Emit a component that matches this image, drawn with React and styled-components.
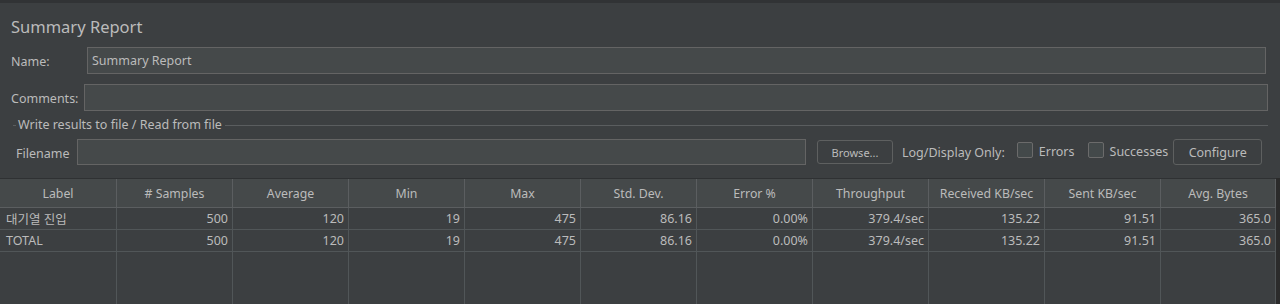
import React from "react";
import styled, { createGlobalStyle } from "styled-components";

const Global = createGlobalStyle`
  html, body { margin: 0; padding: 0; background: #3c3f41; }
  body { font-family: "Noto Sans", "Noto Sans CJK KR", sans-serif; font-size: 12.5px; color: #bbbbbb; }
  * { box-sizing: border-box; }
`;

const Page = styled.div`
  width: 1280px;
  height: 304px;
  overflow: hidden;
  background: #3c3f41;
  border-top: 3px solid #313335;
  display: flex;
  flex-direction: column;
`;

const Title = styled.div`
  font-size: 16.5px;
  color: #bbbbbb;
  padding: 13px 0 0 11px;
  height: 44px;
  line-height: 22px;
`;

const FieldRow = styled.div`
  display: flex;
  align-items: center;
  padding-left: ${(p) => p.$pl || 11}px;
  padding-right: ${(p) => p.$pr || 14}px;
  margin-bottom: ${(p) => p.$mb || 0}px;
`;

const Label = styled.div`
  width: ${(p) => p.$w}px;
  flex: none;
  white-space: nowrap;
  position: relative;
  top: 1px;
`;

const Field = styled.div`
  flex: 1;
  height: 27px;
  background: #45494a;
  border: 1px solid #646464;
  padding: 0 4px;
  display: flex;
  align-items: center;
  color: #bbbbbb;
`;

const Group = styled.div`
  margin: 8px 12px 0 13px;
  height: 12px;
  display: flex;
  align-items: center;
`;

const GroupTitle = styled.div`
  padding: 0 3px 0 2px;
  flex: none;
  line-height: 12px;
`;

const GroupLine = styled.div`
  flex: ${(p) => (p.$grow ? 1 : "none")};
  width: ${(p) => (p.$grow ? "auto" : "3px")};
  height: 1px;
  background: #5a5d5f;
`;

const FileRow = styled.div`
  display: flex;
  align-items: center;
  padding: 0 18px 0 16px;
  margin-top: 8px;
  height: 26px;
`;

const FileField = styled(Field)`
  flex: none;
  width: 729px;
  height: 26px;
`;

const Button = styled.div`
  height: ${(p) => p.$h || 24}px;
  width: ${(p) => p.$w}px;
  border: 1px solid #5e6060;
  border-radius: 3px;
  background: #3c3f41;
  display: flex;
  align-items: center;
  justify-content: center;
  font-size: ${(p) => p.$fs || 12.5}px;
  color: #bbbbbb;
  margin-left: ${(p) => p.$ml || 0}px;
  flex: none;
`;

const Text = styled.div`
  margin-left: ${(p) => p.$ml || 0}px;
  white-space: nowrap;
  flex: none;
  position: relative;
  top: ${(p) => p.$dy || 0}px;
`;

const Check = styled.div`
  width: 16px;
  height: 16px;
  border: 1px solid #6b6b6b;
  border-radius: 2px;
  background: #43494a;
  margin-left: ${(p) => p.$ml || 0}px;
  margin-right: 6px;
  flex: none;
  position: relative;
  top: -2px;
`;

const TableWrap = styled.div`
  margin-top: 13px;
  flex: 1;
  display: flex;
  background: #2b2b2b;
`;

const Table = styled.div`
  width: 1276px;
  display: grid;
  grid-template-columns: 117px repeat(9, 116px) 115px;
  grid-template-rows: 29px 22px 22px 1fr;
  background: #3c3f41;
  border-top: 1px solid #2f3133;
`;

const Head = styled.div`
  background: #45494a;
  border-right: 1px solid #5b5e60;
  border-bottom: 1px solid #5b5e60;
  display: flex;
  align-items: center;
  justify-content: center;
  color: #bbbbbb;
  white-space: nowrap;
  font-size: 12.3px;
`;

const Cell = styled.div`
  border-right: 1px solid #515658;
  border-bottom: ${(p) => (p.$empty ? "none" : "1px solid #515658")};
  display: flex;
  align-items: center;
  justify-content: ${(p) => (p.$left ? "flex-start" : "flex-end")};
  padding: 0 4px 0 6px;
  white-space: nowrap;
  color: #bbbbbb;
`;

const headers = [
  "Label",
  "# Samples",
  "Average",
  "Min",
  "Max",
  "Std. Dev.",
  "Error %",
  "Throughput",
  "Received KB/sec",
  "Sent KB/sec",
  "Avg. Bytes",
];

const rows = [
  ["대기열 진입", "500", "120", "19", "475", "86.16", "0.00%", "379.4/sec", "135.22", "91.51", "365.0"],
  ["TOTAL", "500", "120", "19", "475", "86.16", "0.00%", "379.4/sec", "135.22", "91.51", "365.0"],
];

export default function App() {
  return (
    <Page>
      <Global />
      <Title>Summary Report</Title>
      <FieldRow $pl={11} $pr={14} $mb={10}>
        <Label $w={76}>Name:</Label>
        <Field>Summary Report</Field>
      </FieldRow>
      <FieldRow $pl={11} $pr={12}>
        <Label $w={73}>Comments:</Label>
        <Field />
      </FieldRow>
      <Group>
        <GroupLine />
        <GroupTitle>Write results to file / Read from file</GroupTitle>
        <GroupLine $grow />
      </Group>
      <FileRow>
        <Label $w={61}>Filename</Label>
        <FileField />
        <Button $w={76} $ml={11} $fs={11}>Browse...</Button>
        <Text $ml={9}>Log/Display Only:</Text>
        <Check $ml={12} />
        <Text $dy={-1}>Errors</Text>
        <Check $ml={13} />
        <Text $dy={-1}>Successes</Text>
        <Button $w={89} $h={26} $ml={5}>Configure</Button>
      </FileRow>
      <TableWrap>
        <Table>
          {headers.map((h) => (
            <Head key={h}>{h}</Head>
          ))}
          {rows.map((r, i) =>
            r.map((c, j) => (
              <Cell key={i + "-" + j} $left={j === 0}>
                {c}
              </Cell>
            ))
          )}
          {headers.map((h) => (
            <Cell key={"e" + h} $empty />
          ))}
        </Table>
      </TableWrap>
    </Page>
  );
}
